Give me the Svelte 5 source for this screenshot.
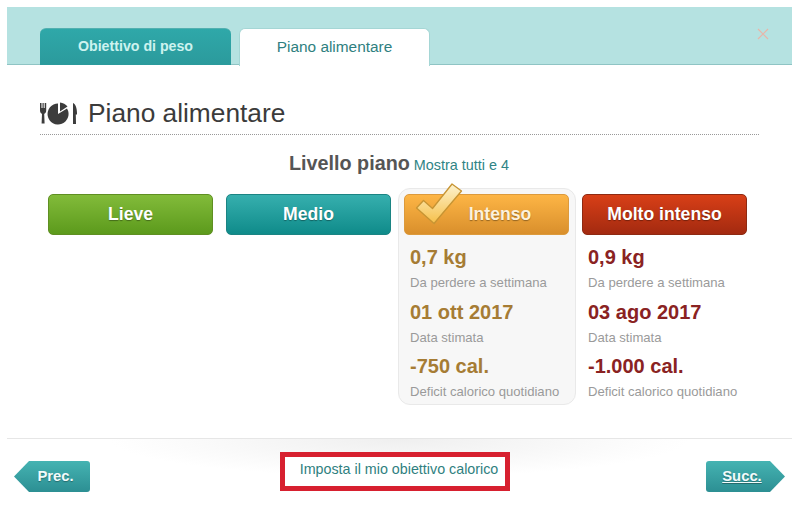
<script>
  const plans = [
    { name: 'Lieve', cls: 'green' },
    { name: 'Medio', cls: 'teal' },
    {
      name: 'Intenso', cls: 'orange', selected: true,
      stats: [['0,7 kg', 'Da perdere a settimana'], ['01 ott 2017', 'Data stimata'], ['-750 cal.', 'Deficit calorico quotidiano']]
    },
    {
      name: 'Molto intenso', cls: 'red',
      stats: [['0,9 kg', 'Da perdere a settimana'], ['03 ago 2017', 'Data stimata'], ['-1.000 cal.', 'Deficit calorico quotidiano']]
    }
  ];
</script>

<div class="page">
  <header class="band">
    <div class="tab off">Obiettivo di peso</div>
    <div class="tab on">Piano alimentare</div>
    <svg class="close" width="12" height="12" viewBox="0 0 12 12"><path d="M1 1l10 10M11 1L1 11" stroke="#e9b5a8" stroke-width="1.2" fill="none"/></svg>
  </header>

  <main class="body">
    <h1>
      <svg width="38" height="24" viewBox="0 0 38 24" fill="#3c3c3c">
        <path d="M0 1h1.500v5h1V1h1.200v5h1V1h1.500v7.500c0 2-1 3-2 3.200l.4 9.800H1.600l.4-9.800c-1-.2-2-1.200-2-3.200z"/>
        <path d="M18 1.500V12l9-5.500A10.500 10.500 0 1 1 18 1.500z"/>
        <path d="M20 .5a10.500 10.500 0 0 1 7.500 4L20 9.500z"/>
        <path d="M33 1c2.500 1 4 5 4 10v1.500h-1.200l.2 9.500h-3z"/>
      </svg>
      <span>Piano alimentare</span>
    </h1>

    <div class="level"><b>Livello piano</b> <a href="#tutti">Mostra tutti e 4</a></div>

    <div class="plans">
      {#each plans as p}
        <section class="plan {p.cls}" class:selected={p.selected}>
          <button class="btn">{p.name}</button>
          {#if p.selected}
            <svg class="check" width="48" height="44" viewBox="0 0 48 44">
              <defs>
                <linearGradient id="chk" x1="0" y1="0" x2="0" y2="1">
                  <stop offset="0" stop-color="#fdf3cf"/>
                  <stop offset="1" stop-color="#f6c04a"/>
                </linearGradient>
              </defs>
              <path d="M1.500 26l7-7.500 9 8L37 2l9.500 7L19 41.500z" fill="url(#chk)" stroke="#c79433" stroke-width="1.300" stroke-linejoin="round"/>
            </svg>
          {/if}
          {#if p.stats}
            <dl>
              {#each p.stats as s}
                <dt>{s[0]}</dt>
                <dd>{s[1]}</dd>
              {/each}
            </dl>
          {/if}
        </section>
      {/each}
    </div>
  </main>

  <footer class="foot">
    <a class="nav prev" href="#prec">Prec.</a>
    <div class="goal">Imposta il mio obiettivo calorico</div>
    <a class="nav next" href="#succ">Succ.</a>
  </footer>
</div>

<style>
  :global(body) {
    margin: 0;
    background: #fff;
  }
  .page {
    width: 800px;
    height: 512px;
    box-sizing: border-box;
    padding: 7px 8px 0 7px;
    font-family: "Liberation Sans", Arial, sans-serif;
    display: flex;
    flex-direction: column;
    overflow: hidden;
  }
  .band {
    height: 58px;
    box-sizing: border-box;
    background: #b5e2e1;
    border-bottom: 1px solid #8fc4c4;
    padding: 21px 0 0 33px;
    display: flex;
    gap: 8px;
    position: relative;
  }
  .close {
    position: absolute;
    right: 23px;
    top: 21px;
  }
  .tab {
    width: 191px;
    height: 37px;
    box-sizing: border-box;
    border-radius: 6px 6px 0 0;
    text-align: center;
    font-size: 14px;
    line-height: 37px;
  }
  .off {
    background: linear-gradient(#2fa8a9, #2b9a9c);
    border-top: 1px solid #53b0b0;
    color: #cdf3ef;
    font-weight: bold;
    font-size: 14.2px;
    line-height: 35px;
  }
  .on {
    background: #fff;
    border: 1px solid #a5d6d5;
    border-bottom: 0;
    color: #2f7f80;
    font-size: 15.4px;
    line-height: 35px;
    height: 38px;
    margin-bottom: -1px;
  }
  .body {
    flex: 1;
    padding: 0 33px;
  }
  h1 {
    margin: 0;
    height: 70px;
    box-sizing: border-box;
    padding-top: 33px;
    border-bottom: 1px dotted #999;
    display: flex;
    align-items: flex-start;
    gap: 11px;
    font-size: 26.3px;
    font-weight: normal;
    color: #3b3b3b;
    line-height: 30px;
  }
  h1 svg {
    margin-top: 4px;
    flex: none;
    margin-right: -1px;
  }
  .level {
    margin-top: 16px;
    text-align: center;
    line-height: 24px;
    font-size: 14.4px;
    width: 718px;
  }
  .level b {
    font-size: 19.8px;
    color: #555;
  }
  .level a {
    color: #2f8485;
    text-decoration: none;
  }
  .plans {
    display: flex;
    margin: 11px 0 0 2px;
    align-items: flex-start;
  }
  .plan {
    width: 178px;
    height: 217px;
    box-sizing: border-box;
    padding: 5px 6px 0 5px;
    position: relative;
    border: 1px solid transparent;
  }
  .selected {
    background: #f7f7f7;
    border-color: #e9e9e9;
    border-radius: 12px;
  }
  .btn {
    display: block;
    width: 165px;
    height: 41px;
    border-radius: 5px;
    padding: 0;
    font: bold 17.6px "Liberation Sans", Arial, sans-serif;
    color: #fff;
    text-shadow: 0 1px 1px rgba(0, 0, 0, 0.35);
  }
  .green .btn {
    background: linear-gradient(#82bb3a, #5c9a1c);
    border: 1px solid #5f8f22;
  }
  .teal .btn {
    background: linear-gradient(#36afae, #0f8b8a);
    border: 1px solid #1b8483;
  }
  .orange .btn {
    background: linear-gradient(#fdb545, #d98f2c);
    border: 1px solid #dc9a3c;
    padding-left: 27px;
    color: #fdf1dc;
  }
  .red .btn {
    background: linear-gradient(#d83f17, #a32a10);
    border: 1px solid #8e2a12;
  }
  .check {
    position: absolute;
    left: 16px;
    top: -7px;
  }
  dl {
    margin: 9px 0 0;
    padding-left: 6px;
  }
  dt {
    font-size: 20px;
    font-weight: bold;
    line-height: 26px;
  }
  dd {
    margin: 0 0 8.5px;
    font-size: 13.1px;
    line-height: 14px;
    padding-top: 6px;
    color: #9a9a9a;
    white-space: nowrap;
  }
  .orange dt { color: #a67c34; }
  .red dt { color: #8a2222; }
  .foot {
    height: 74px;
    flex: none;
    box-sizing: border-box;
    border-top: 1px solid #e6e6e6;
    background: radial-gradient(ellipse 290px 38px at 50% 0, #efefef, rgba(255, 255, 255, 0));
    display: flex;
    justify-content: space-between;
    align-items: flex-start;
    padding: 0 7px;
    position: relative;
  }
  .nav {
    margin-top: 22px;
    height: 31px;
    width: 76px;
    box-sizing: border-box;
    background: linear-gradient(#45b3b2, #2c8f93);
    color: #f2fbfb;
    font-size: 14.8px;
    font-weight: bold;
    line-height: 30px;
    text-align: center;
    text-shadow: 0 1px 1px rgba(0, 0, 0, 0.3);
  }
  .prev {
    text-decoration: none;
    clip-path: polygon(0 50%, 15px 0, 100% 0, 100% 100%, 15px 100%);
    border-radius: 0 3px 3px 0;
    padding-left: 7px;
  }
  .next {
    width: 79px;
    text-decoration: underline;
    clip-path: polygon(0 0, 64px 0, 100% 50%, 64px 100%, 0 100%);
    border-radius: 3px 0 0 3px;
    padding-right: 7px;
  }
  .goal {
    position: absolute;
    left: 273px;
    top: 13px;
    width: 230px;
    height: 39px;
    box-sizing: border-box;
    border: 5px solid #d7202f;
    background: #fff;
    color: #2f7f80;
    font-size: 14.3px;
    line-height: 24px;
    text-align: center;
    padding-left: 8px;
  }
</style>
